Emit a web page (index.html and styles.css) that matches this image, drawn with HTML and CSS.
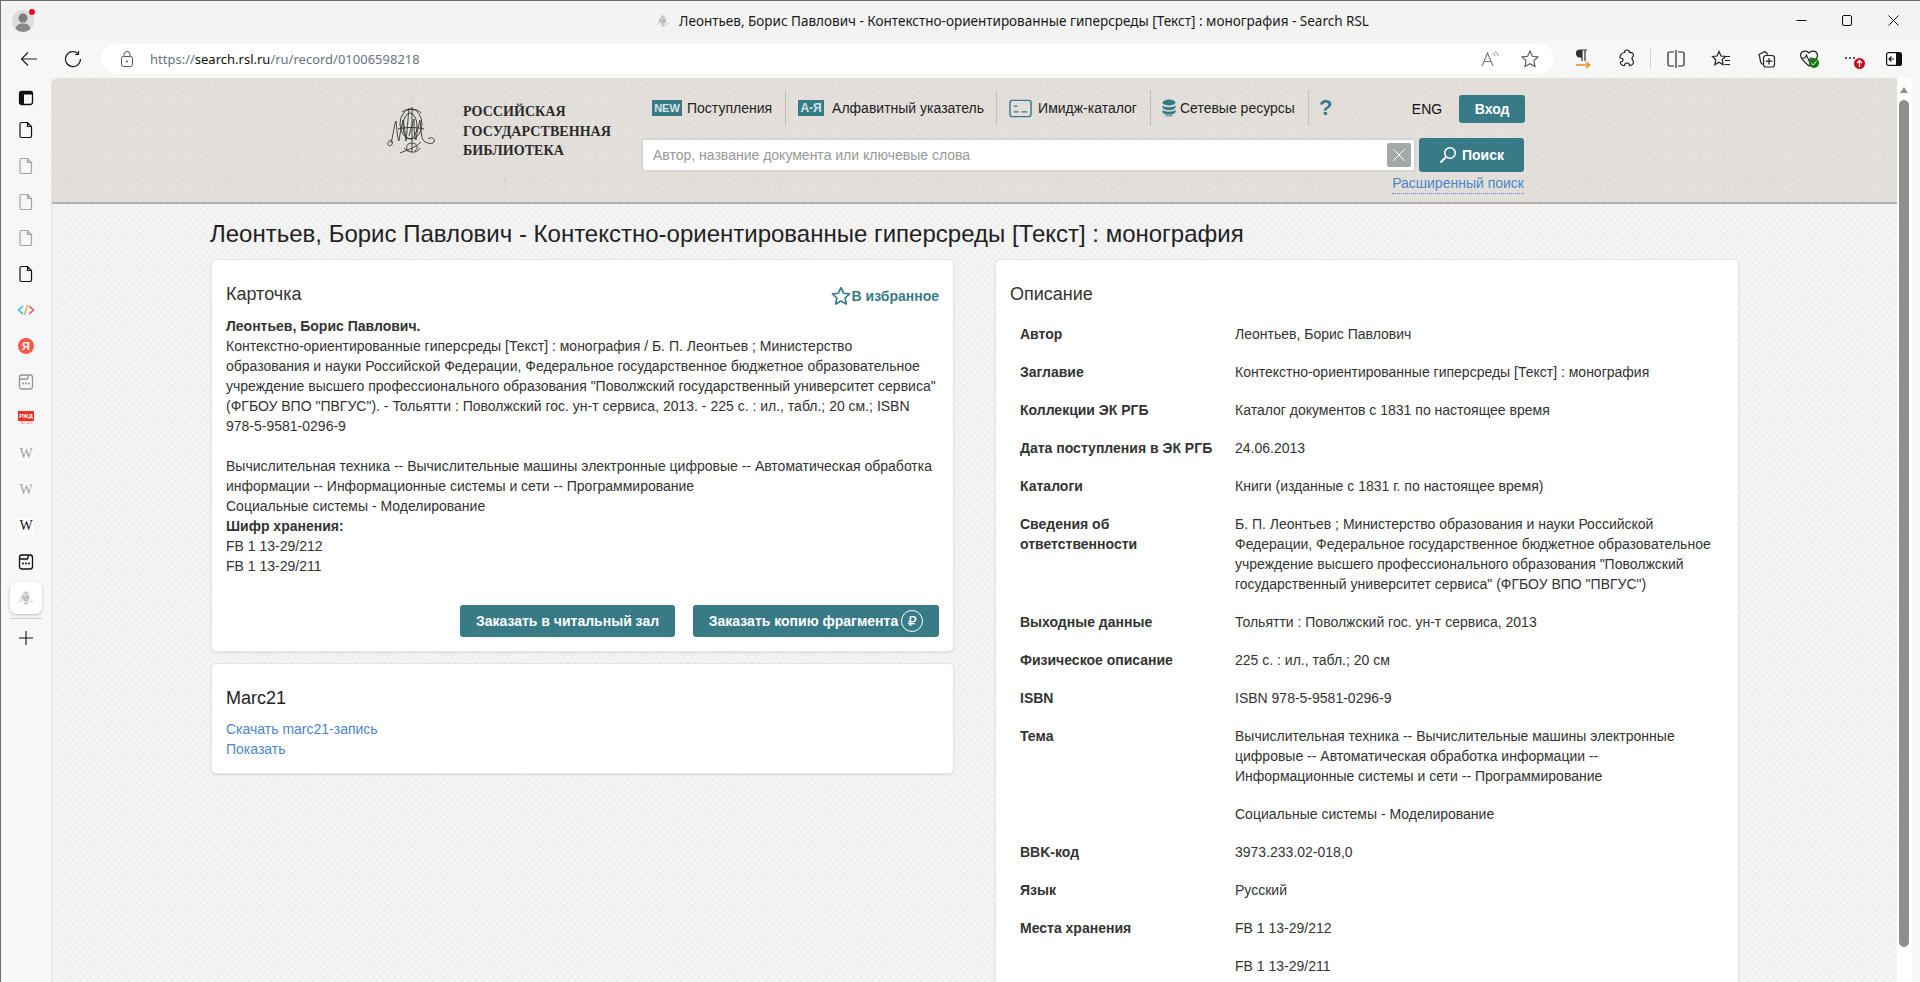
FILE: index.html
```html
<!DOCTYPE html>
<html lang="ru">
<head>
<meta charset="utf-8">
<title>Леонтьев, Борис Павлович - Контекстно-ориентированные гиперсреды [Текст] : монография - Search RSL</title>
<link rel="stylesheet" href="styles.css">
</head>
<body>
<svg class="sprite" aria-hidden="true">
  <symbol id="doc" viewBox="0 0 20 20"><path d="M5.500 2.500h6l4 4v9.500a1.500 1.500 0 0 1-1.500 1.500H5.500A1.500 1.500 0 0 1 4 16V4a1.500 1.500 0 0 1 1.500-1.500zM11.500 2.500V6.500h4" fill="none" stroke="currentColor" stroke-width="1.200"/></symbol>
  <symbol id="tabs" viewBox="0 0 20 20"><path d="M3.500 5.500A2.500 2.500 0 0 1 6 3h8a2.500 2.500 0 0 1 2.500 2.500v9A2.500 2.500 0 0 1 14 17H6a2.500 2.500 0 0 1-2.500-2.500zM3.500 7H11.500L12.500 3" fill="none" stroke="currentColor" stroke-width="1.300"/><circle cx="7" cy="11.500" r="1" fill="currentColor"/><circle cx="10" cy="11.500" r="1" fill="currentColor"/><circle cx="13" cy="11.500" r="1" fill="currentColor"/></symbol>
  <symbol id="mono" viewBox="0 0 50 50"><g fill="none" stroke="currentColor" stroke-width=".9"><ellipse cx="25" cy="19" rx="11" ry="15"/><ellipse cx="24" cy="21" rx="7" ry="13"/><path d="M1 38c2 5 7 2 5-2-2-2-4 0-3 2M5 38c2-7 3-17 5-22 1 7 1 16 3 20M13 36c1-8 3-17 4-21 2 7 2 16 3 21M20 36c1-9 2-22 3-33M23 31c2-8 4-14 5-17 0 8 0 16 2 21 1-8 3-16 4-20 1 8 1 16 3 20 2 3 9 5 11 2 2-3-3-6-6-3"/><path d="M26 2v45M14 48c7-3 15-5 21-11M18 43c4 5 13 6 16 0M16 7c5-4 15-4 19 1M12 24c8-2 18-2 26 0M22 46c-3-4-1-8 4-8s7 5 3 8"/></g></symbol>
</svg>

<div class="window">
  <header class="titlebar">
    <div class="avatar">
      <svg width="22" height="26" viewBox="0 0 22 26"><circle cx="11" cy="13" r="11" fill="#dcdcdc"/><circle cx="11" cy="10" r="4.500" fill="#7c7c7c"/><path d="M3.500 21c1-4.500 4-5.500 7.500-5.500s6.500 1 7.500 5.500a11 11 0 0 1-15 0z" fill="#8a8a8a"/></svg>
      <span class="avatar-dot"></span>
    </div>
    <div class="title">
      <svg class="title-fav" width="12" height="12"><use href="#mono"/></svg>
      <span>Леонтьев, Борис Павлович - Контекстно-ориентированные гиперсреды [Текст] : монография - Search RSL</span>
    </div>
    <div class="winctl">
      <span class="winbtn"><svg width="11" height="11" viewBox="0 0 11 11"><path d="M.5 5.500h10" stroke="#111" fill="none"/></svg></span>
      <span class="winbtn"><svg width="11" height="11" viewBox="0 0 11 11"><rect x=".5" y=".5" width="9" height="10" rx="1.500" fill="none" stroke="#111"/></svg></span>
      <span class="winbtn"><svg width="11" height="11" viewBox="0 0 11 11"><path d="M.5.500l10 10M10.500.500l-10 10" stroke="#111" fill="none"/></svg></span>
    </div>
  </header>

  <div class="toolbar">
    <span class="navbtn"><svg width="18" height="18" viewBox="0 0 18 18"><path d="M17 9H1.500M8 2.500 1.500 9 8 15.500" fill="none" stroke="#222" stroke-width="1.200"/></svg></span>
    <span class="navbtn"><svg width="18" height="18" viewBox="0 0 18 18"><path d="M14 3.500A7.500 7.500 0 1 0 16.500 9M14.500 1v3.500H11" fill="none" stroke="#222" stroke-width="1.200"/></svg></span>
    <div class="address">
      <svg class="lock" width="14" height="18" viewBox="0 0 14 18"><rect x="1.500" y="6.500" width="11" height="10" rx="2" fill="none" stroke="#555"/><path d="M4 6.500V4.500a3 3 0 0 1 6 0v2" fill="none" stroke="#555"/><circle cx="7" cy="11.500" r="1" fill="#555"/></svg>
      <span class="url"><span class="url-dim">https://</span>search.rsl.ru<span class="url-dim">/ru/record/01006598218</span></span>
      <span class="addr-icons">
        <svg width="20" height="20" viewBox="0 0 20 20"><path d="M2 17 7.500 4 13 17M4 12.500h7" fill="none" stroke="#777" stroke-width="1.100"/><path d="M13 4c1.500.5 2 2 2 3M15 2.500c2 .8 3 2.500 3 4.500" fill="none" stroke="#888"/></svg>
        <svg width="20" height="20" viewBox="0 0 20 20"><path d="M10 2l2.400 5.200 5.600.7-4.100 3.900 1.100 5.700-5-2.800-5 2.800 1.100-5.700L2 7.900l5.600-.7z" fill="none" stroke="#555" stroke-width="1.100"/></svg>
      </span>
    </div>
    <span class="tb-icon tb-first"><svg width="20" height="22" viewBox="-1 0 20 22"><path d="M9 2H7a3.500 3.500 0 0 0 0 7h2zM9 2v11M12 2v11M6.500 2H14" fill="#333" stroke="#333" stroke-width="1.200"/><path d="M3 17h13M13 14l3.500 3-3.500 3" fill="none" stroke="#f08a24" stroke-width="1.600"/></svg></span>
    <span class="tb-icon"><svg width="20" height="20" viewBox="0 0 20 20"><path d="M7.500 3.500a2.500 2.500 0 0 1 5 0c2-.5 4 1 4 3-.1 1-1.500 1-1.500 3s1.500 2 1.500 3.500c0 2-2 3.800-4 3.500a2.500 2.500 0 0 0-5 0c-2.500.3-4.500-1.500-4-3.500 2 0 2.500-1.500 2.500-2.500S4.500 9 3 9c-.3-3 2-5.500 4.500-5.500z" fill="none" stroke="#222" stroke-width="1.200"/></svg></span>
    <span class="tb-sep"></span>
    <span class="tb-icon"><svg width="20" height="20" viewBox="0 0 20 20"><path d="M8 3H3.500A1.500 1.500 0 0 0 2 4.500v11A1.500 1.500 0 0 0 3.500 17H8M12 3h4.500A1.500 1.500 0 0 1 18 4.500v11a1.500 1.500 0 0 1-1.500 1.500H12M10 1v18" fill="none" stroke="#222" stroke-width="1.200"/></svg></span>
    <span class="tb-icon"><svg width="20" height="20" viewBox="0 0 20 20"><path d="M8 2.500l2 4.500 4.500.5-3.300 3.200.9 5-4.100-2.500-4.100 2.500.9-5L1.500 7.500 6 7z" fill="none" stroke="#222" stroke-width="1.200"/><path d="M15 7.500h4M14 11.500h5M13.500 15.500h5.500" stroke="#222" stroke-width="1.200"/></svg></span>
    <span class="tb-icon"><svg width="20" height="20" viewBox="0 0 20 20"><path d="M4 9 3 5.500 9 2.500l3 3M4 9c0 3 .5 5 2.500 6.500" fill="none" stroke="#222" stroke-width="1.200"/><rect x="7.500" y="6.500" width="11" height="11.500" rx="2.500" fill="none" stroke="#222" stroke-width="1.200"/><path d="M13 9v6.500M9.800 12.200h6.500" stroke="#222" stroke-width="1.200"/></svg></span>
    <span class="tb-icon"><svg class="tb-heart" width="20" height="20" viewBox="0 0 20 20"><path d="M10 4c2-3 8-2.500 8.500 2 .2 2-1.500 4.500-4 7L10 17C6 13.500 1.500 10 1.500 6 2 1.500 8 1 10 4z" fill="none" stroke="#222" stroke-width="1.200"/><path d="M2 9h4l1.500-3 2.500 6 1.500-3h2" fill="none" stroke="#222" stroke-width="1.100"/></svg><span class="badge-ok"><svg width="8" height="8" viewBox="0 0 8 8"><path d="M1.500 4.200 3.300 6 6.500 2.200" fill="none" stroke="#fff"/></svg></span></span>
    <span class="tb-icon"><span class="dots"><i></i><i></i><i></i></span><span class="badge-up"><svg width="9" height="9" viewBox="0 0 9 9"><path d="M4.500 8V1.500M2 4l2.500-2.500L7 4" fill="none" stroke="#fff" stroke-width="1.300"/></svg></span></span>
    <span class="tb-icon tb-last"><svg width="16" height="14" viewBox="0 0 16 14"><rect x=".6" y=".6" width="14.800" height="12.800" rx="2" fill="#fff" stroke="#111" stroke-width="1.200"/><path d="M10 1h4a1.500 1.500 0 0 1 1.500 1.500v9A1.500 1.500 0 0 1 14 13h-4z" fill="#111"/><path d="M8 7H3M5.500 4.500 3 7l2.500 2.500" fill="none" stroke="#111" stroke-width="1.200"/></svg></span>
  </div>

  <div class="workspace">
    <nav class="sidebar">
      <span class="sb-item sb-first"><svg width="20" height="20" viewBox="0 0 20 20"><rect x="3.500" y="3.500" width="13" height="13" rx="2.500" fill="none" stroke="#111" stroke-width="1.300"/><path d="M3.500 6A2.500 2.500 0 0 1 6 3.500h10.500v3H8v10H6A2.500 2.500 0 0 1 3.500 14z" fill="#111"/></svg></span>
      <span class="sb-item"><svg width="20" height="20" class="ic-dark"><use href="#doc"/></svg></span>
      <span class="sb-item"><svg width="20" height="20" class="ic-dim"><use href="#doc"/></svg></span>
      <span class="sb-item"><svg width="20" height="20" class="ic-dim"><use href="#doc"/></svg></span>
      <span class="sb-item"><svg width="20" height="20" class="ic-dim"><use href="#doc"/></svg></span>
      <span class="sb-item"><svg width="20" height="20" class="ic-dark"><use href="#doc"/></svg></span>
      <span class="sb-item"><svg width="18" height="12" viewBox="0 0 18 12"><path d="M6 2 1.500 6 6 10" fill="none" stroke="#30b6e0" stroke-width="1.500"/><path d="M10.500 1 7.500 11" fill="none" stroke="#f5a53c" stroke-width="1.500"/><path d="M12 2l4.500 4L12 10" fill="none" stroke="#ec4b78" stroke-width="1.500"/></svg></span>
      <span class="sb-item"><span class="fav-ya">Я</span></span>
      <span class="sb-item"><svg width="20" height="20" class="ic-dim2"><use href="#tabs"/></svg></span>
      <span class="sb-item"><span class="fav-rzd"><span class="rzd-top">РЖД</span><span class="rzd-sub">ПАССАЖ</span></span></span>
      <span class="sb-item"><span class="fav-w fav-w-dim">W</span></span>
      <span class="sb-item"><span class="fav-w fav-w-dim">W</span></span>
      <span class="sb-item"><span class="fav-w">W</span></span>
      <span class="sb-item"><svg width="20" height="20" class="ic-dark"><use href="#tabs"/></svg></span>
      <span class="sb-item"><span class="sb-active"><svg width="14" height="14" class="ic-mono"><use href="#mono"/></svg></span></span>
      <span class="sb-divider"></span>
      <span class="sb-item"><svg width="16" height="16" viewBox="0 0 16 16"><path d="M8 1v14M1 8h14" stroke="#111" stroke-width="1.100" fill="none"/></svg></span>
    </nav>

    <div class="page">
      <div class="viewport">
        <header class="site-head">
          <a class="logo">
            <svg class="logo-mark" width="50" height="50"><use href="#mono"/></svg>
            <span class="logo-text">РОССИЙСКАЯ<br>ГОСУДАРСТВЕННАЯ<br>БИБЛИОТЕКА</span>
          </a>
          <div class="head-right">
            <div class="menu-row">
              <a class="menu-item menu-first"><span class="tag tag-new">NEW</span>Поступления</a>
              <a class="menu-item menu-alpha"><span class="tag tag-az">А-Я</span>Алфавитный указатель</a>
              <a class="menu-item menu-iconed menu-image"><svg class="menu-ic" width="23" height="19" viewBox="0 0 24 19"><rect x="1" y="1" width="22" height="17" rx="2.500" fill="none" stroke="#387b87" stroke-width="1.500"/><path d="M5 7h4M5 13h5M13 13h6" stroke="#387b87" stroke-width="1.500"/></svg>Имидж-каталог</a>
              <a class="menu-item menu-iconed"><svg class="menu-ic menu-ic-db" width="14" height="18" viewBox="0 0 14 18"><ellipse cx="7" cy="3.500" rx="6.500" ry="3" fill="#387b87"/><path d="M.5 6c1 3 12 3 13 0v2.500c-1 3.500-12 3.500-13 0zM.5 10.500c1 3 12 3 13 0V13c-1 3.500-12 3.500-13 0zM3 15.500c2 1.500 6 1.500 8 0v.5c-2 2-6 2-8 0z" fill="#387b87"/></svg>Сетевые ресурсы</a>
              <a class="menu-help">?</a>
              <a class="lang">ENG</a>
              <a class="btn btn-login">Вход</a>
            </div>
            <div class="search-row">
              <div class="search-box">
                <span class="placeholder">Автор, название документа или ключевые слова</span>
                <span class="search-clear"><svg width="14" height="14" viewBox="0 0 14 14"><path d="M1 1l12 12M13 1 1 13" stroke="#fff" fill="none"/></svg></span>
              </div>
              <a class="btn btn-search"><svg width="18" height="18" viewBox="0 0 18 18"><circle cx="11" cy="7" r="5.300" fill="none" stroke="#fff" stroke-width="1.600"/><path d="M7 11 1.500 16.500" stroke="#fff" stroke-width="2" fill="none"/></svg>Поиск</a>
            </div>
            <div class="adv-row"><a class="adv-link">Расширенный поиск</a></div>
          </div>
        </header>

        <main class="content">
          <h1 class="doc-title">Леонтьев, Борис Павлович - Контекстно-ориентированные гиперсреды [Текст] : монография</h1>
          <div class="columns">
            <div class="col">
              <section class="panel">
                <div class="panel-head">
                  <h2 class="panel-title">Карточка</h2>
                  <a class="fav-link"><svg width="20" height="20" viewBox="0 0 18 18"><path d="M9 1.500l2.300 5 5.400.6-4 3.700 1.100 5.400L9 13.500l-4.800 2.700 1.100-5.400-4-3.700 5.400-.6z" fill="none" stroke="#387b87" stroke-width="1.500" stroke-linejoin="round"/></svg>В избранное</a>
                </div>
                <div class="card-text">
                  <b>Леонтьев, Борис Павлович.</b><br>
                  Контекстно-ориентированные гиперсреды [Текст] : монография / Б. П. Леонтьев ; Министерство образования и науки Российской Федерации, Федеральное государственное бюджетное образовательное учреждение высшего профессионального образования "Поволжский государственный университет сервиса" (ФГБОУ ВПО "ПВГУС"). - Тольятти : Поволжский гос. ун-т сервиса, 2013. - 225 с. : ил., табл.; 20 см.; ISBN 978-5-9581-0296-9<br><br>
                  Вычислительная техника -- Вычислительные машины электронные цифровые -- Автоматическая обработка информации -- Информационные системы и сети -- Программирование<br>
                  Социальные системы - Моделирование<br>
                  <b>Шифр хранения:</b><br>
                  FB 1 13-29/212<br>
                  FB 1 13-29/211
                </div>
                <div class="card-actions">
                  <a class="btn btn-order btn-hall">Заказать в читальный зал</a>
                  <a class="btn btn-order btn-copy">Заказать копию фрагмента<span class="ruble">₽</span></a>
                </div>
              </section>
              <section class="panel panel-marc">
                <h2 class="panel-title panel-title-dark">Marc21</h2>
                <div class="marc-links">
                  <a class="link">Скачать marc21-запись</a>
                  <a class="link">Показать</a>
                </div>
              </section>
            </div>
            <div class="col">
              <section class="panel panel-desc">
                <h2 class="panel-title">Описание</h2>
                <table class="desc">
                  <tr><th>Автор</th><td>Леонтьев, Борис Павлович</td></tr>
                  <tr><th>Заглавие</th><td>Контекстно-ориентированные гиперсреды [Текст] : монография</td></tr>
                  <tr><th>Коллекции ЭК РГБ</th><td>Каталог документов с 1831 по настоящее время</td></tr>
                  <tr><th>Дата поступления в ЭК РГБ</th><td>24.06.2013</td></tr>
                  <tr><th>Каталоги</th><td>Книги (изданные с 1831 г. по настоящее время)</td></tr>
                  <tr><th>Сведения об ответственности</th><td>Б. П. Леонтьев ; Министерство образования и науки Российской Федерации, Федеральное государственное бюджетное образовательное учреждение высшего профессионального образования "Поволжский государственный университет сервиса" (ФГБОУ ВПО "ПВГУС")</td></tr>
                  <tr><th>Выходные данные</th><td>Тольятти : Поволжский гос. ун-т сервиса, 2013</td></tr>
                  <tr><th>Физическое описание</th><td>225 с. : ил., табл.; 20 см</td></tr>
                  <tr><th>ISBN</th><td>ISBN 978-5-9581-0296-9</td></tr>
                  <tr><th>Тема</th><td><p>Вычислительная техника -- Вычислительные машины электронные цифровые -- Автоматическая обработка информации -- Информационные системы и сети -- Программирование</p><p>Социальные системы - Моделирование</p></td></tr>
                  <tr><th>BBK-код</th><td>3973.233.02-018,0</td></tr>
                  <tr><th>Язык</th><td>Русский</td></tr>
                  <tr><th>Места хранения</th><td><p>FB 1 13-29/212</p><p>FB 1 13-29/211</p></td></tr>
                </table>
              </section>
            </div>
          </div>
        </main>
      </div>
      <div class="scrollbar">
        <span class="sc-up"></span>
        <span class="sc-thumb"></span>
      </div>
    </div>
  </div>
</div>
</body>
</html>
```

FILE: styles.css
```css
* { box-sizing: border-box; }
html, body { margin: 0; height: 982px; overflow: hidden; }
body { font-family: "Liberation Sans", Arial, sans-serif; font-size: 14px; line-height: 20px; color: #333; background: #f7f7f7; }
a { color: inherit; text-decoration: none; }
.sprite { position: absolute; width: 0; height: 0; }

.window { height: 982px; display: flex; flex-direction: column; border-top: 1px solid #6e6e6e; border-left: 1px solid #6e6e6e; }

/* title bar */
.titlebar { height: 39px; flex: none; display: flex; align-items: center; background: #f3f3f3; }
.avatar { position: relative; width: 44px; flex: none; padding-left: 11px; display: flex; align-items: center; }
.avatar-dot { position: absolute; left: 28px; top: 1px; width: 6px; height: 6px; border-radius: 50%; background: #e81123; }
.title { flex: 1; display: flex; align-items: center; justify-content: center; gap: 10px; padding-left: 203px; font-family: "Noto Sans", sans-serif; font-size: 13.500px; color: #1a1a1a; white-space: nowrap; }
.title-fav { color: #777; }
.winctl { display: flex; flex: none; margin-right: 4px; }
.winbtn { width: 46px; height: 39px; display: flex; align-items: center; justify-content: center; }

/* toolbar */
.toolbar { height: 38px; flex: none; display: flex; align-items: center; background: #f7f7f7; padding-left: 6px; }
.navbtn { width: 44px; height: 30px; display: flex; align-items: center; justify-content: center; flex: none; }
.address { width: 1453px; height: 30px; margin-left: 6px; flex: none; display: flex; align-items: center; background: #fff; border-radius: 15px; padding-left: 19px; }
.url { margin-left: 16px; font-family: "Noto Sans", sans-serif; font-size: 13px; color: #111; white-space: nowrap; }
.url-dim { color: #6b7280; }
.addr-icons { margin-left: auto; display: flex; gap: 20px; padding-right: 14px; }
.tb-icon { width: 45px; height: 30px; flex: none; display: flex; align-items: center; justify-content: center; position: relative; }
.tb-first { margin-left: 6px; width: 44px; }
.tb-last { width: 32px; }
.tb-sep { width: 4px; height: 20px; flex: none; position: relative; }
.tb-sep::before { content: ""; position: absolute; left: 1px; top: 0; width: 1px; height: 20px; background: #cfcfcf; }
.tb-heart { margin-left: -3px; }
.badge-ok { position: absolute; left: 21px; top: 14px; width: 10px; height: 10px; border-radius: 50%; background: #107c10; display: flex; align-items: center; justify-content: center; }
.dots { display: flex; gap: 2px; margin-top: -2px; margin-left: -11px; }
.dots i { width: 2px; height: 2px; background: #222; border-radius: 50%; }
.badge-up { position: absolute; left: 21px; top: 14px; width: 11px; height: 11px; border-radius: 50%; background: #c50f1f; display: flex; align-items: center; justify-content: center; }

/* workspace */
.workspace { flex: 1; min-height: 0; display: flex; }
.sidebar { width: 51px; flex: none; display: flex; flex-direction: column; align-items: center; background: #f7f7f7; border-right: 1px solid #e4e4e4; padding-top: 1px; }
.sb-item { height: 36px; width: 100%; flex: none; display: flex; align-items: center; justify-content: center; }
.sb-first { height: 33px; padding-top: 4px; }
.ic-dark { color: #111; }
.ic-dim { color: #a3a3a3; }
.ic-dim2 { color: #969696; }
.ic-mono { color: #777; }
.fav-ya { width: 16px; height: 16px; border-radius: 50%; background: #fc5a48; color: #fff; font-size: 11px; font-weight: bold; line-height: 16px; text-align: center; }
.fav-rzd { display: flex; flex-direction: column; align-items: center; width: 16px; }
.rzd-top { width: 16px; height: 10px; background: #ee3124; color: #fff; font-size: 6px; line-height: 10px; font-weight: bold; text-align: center; }
.rzd-sub { color: #e98c86; font-size: 3px; line-height: 4px; }
.fav-w { width: 16px; height: 16px; background: #fff; font-family: "Liberation Serif", serif; font-size: 14px; line-height: 16px; text-align: center; color: #111; }
.fav-w-dim { color: #a0a0a0; background: #fafafa; }
.sb-active { width: 32px; height: 32px; background: #fff; border-radius: 7px; box-shadow: 0 1px 3px rgba(0,0,0,.25); display: flex; align-items: center; justify-content: center; }
.sb-divider { width: 32px; height: 1px; background: #cfcfcf; margin: 2px 0 1px; flex: none; }

/* page */
.page { flex: 1; min-width: 0; display: flex; margin-right: 8px; background: #fff; border-top-left-radius: 6px; overflow: hidden; }
.viewport { flex: 1; min-width: 0; overflow: hidden; background-color: #f5f5f5; background-image: repeating-linear-gradient(45deg, rgba(0,0,0,.014) 0 2px, transparent 2px 5px), repeating-linear-gradient(-45deg, rgba(0,0,0,.014) 0 2px, transparent 2px 5px); }
.scrollbar { width: 15px; flex: none; background: #fff; position: relative; }
.sc-up { position: absolute; left: 3px; top: 9px; border-left: 4.500px solid transparent; border-right: 4.500px solid transparent; border-bottom: 6px solid #8f8f8f; }
.sc-thumb { position: absolute; left: 2px; top: 22px; width: 10px; height: 847px; border-radius: 5px; background: #8f8f8f; }

/* site header */
.site-head { height: 126px; display: flex; padding-left: 334px; background-color: #e2dfdb; border-bottom: 2px solid #b3b1ae;
  background-image:
    radial-gradient(circle at 30% 40%, rgba(255,255,255,.3) 0 .6px, transparent 1px),
    radial-gradient(circle at 70% 20%, rgba(150,145,135,.14) 0 .6px, transparent 1px),
    radial-gradient(circle at 15% 80%, rgba(255,255,255,.22) 0 .6px, transparent 1px),
    radial-gradient(circle at 60% 70%, rgba(140,135,125,.16) 0 .7px, transparent 1.100px);
  background-size: 13px 17px, 23px 11px, 19px 29px, 31px 37px; }
.logo { display: flex; align-items: flex-start; padding-top: 27px; width: 256px; flex: none; }
.logo-mark { color: #333; flex: none; }
.logo-text { margin: -3px 0 0 27px; font-family: "Liberation Serif", serif; font-weight: bold; font-size: 14.100px; line-height: 19.500px; color: #2b2b2b; white-space: nowrap; }
.head-right { width: 883px; flex: none; }
.menu-row { height: 36px; margin-top: 12px; padding-left: 10px; display: flex; align-items: center; }
.menu-item { height: 36px; display: flex; align-items: center; color: #222; white-space: nowrap; padding: 0 13px 0 12px; border-right: 1px solid #c2c0bc; }
.menu-first { padding-left: 0; }
.menu-alpha { padding-right: 12px; }
.menu-iconed { padding-left: 11px; }
.menu-image { padding-left: 12px; }
.tag { height: 16px; margin-right: 5px; background: #387b87; color: #d3e5e8; font-size: 11px; line-height: 16px; font-weight: bold; text-align: center; }
.tag-new { width: 30px; }
.tag-az { width: 26px; margin-right: 8px; font-size: 12px; }
.menu-ic { margin-right: 6px; flex: none; }
.menu-ic-db { margin-right: 4px; }
.menu-help { margin-left: 10px; width: 14px; color: #387b87; font-size: 22px; font-weight: bold; line-height: 36px; }
.lang { margin-left: 79px; color: #111; padding-top: 2px; }
.btn { display: flex; align-items: center; justify-content: center; background: #387b87; color: #fff; font-weight: bold; border-radius: 3px; white-space: nowrap; }
.btn-login { width: 66px; height: 28px; margin-left: 17px; margin-top: 2px; }
.search-row { display: flex; margin: 12px 0 0 -1px; }
.search-box { width: 775px; height: 34px; background: #fff; border: 2px solid #d8d6d2; border-radius: 4px; display: flex; align-items: center; padding: 0 3px 0 10px; }
.placeholder { color: #999; }
.search-clear { margin-left: auto; width: 24px; height: 24px; background: #a5a8a8; border-radius: 2px; display: flex; align-items: center; justify-content: center; }
.btn-search { width: 105px; height: 34px; margin-left: 3px; gap: 5px; }
.adv-row { display: flex; justify-content: flex-end; width: 882px; margin-top: 2px; }
.adv-link { color: #4a86c8; border-bottom: 1px dotted #4a86c8; line-height: 19px; }

/* content */
.content { width: 1557px; margin: 0 auto; padding: 17px 15px 0; }
.doc-title { margin: 0 0 12px -1px; font-size: 24px; line-height: 26px; font-weight: normal; color: #222; white-space: nowrap; }
.columns { display: grid; grid-template-columns: 743px 744px; column-gap: 41px; }
.col { min-width: 0; }
.panel { background: #fff; border: 1px solid #e4e4e4; border-radius: 5px; box-shadow: 0 1px 2px rgba(0,0,0,.1); padding: 24px 14px 14px; }
.panel-marc { margin-top: 11px; }
.panel-head { display: flex; justify-content: space-between; align-items: flex-start; }
.panel-title { margin: 0; font-size: 18px; line-height: 20px; font-weight: normal; color: #333; }
.panel-title-dark { color: #222; }
.fav-link { display: flex; align-items: center; gap: 1px; color: #387b87; font-weight: bold; margin-top: 2px; }
.card-text { margin-top: 10px; }
.card-actions { display: flex; justify-content: flex-end; gap: 18px; margin-top: 29px; }
.btn-order { height: 32px; }
.btn-hall { width: 215px; }
.btn-copy { width: 246px; gap: 3px; }
.ruble { width: 22px; height: 22px; border: 1px solid #fff; border-radius: 50%; display: flex; align-items: center; justify-content: center; font-weight: normal; font-size: 14px; font-family: "DejaVu Sans", sans-serif; }
.marc-links { margin-top: 11px; }
.link { display: block; color: #4a86c8; }
.desc { width: 100%; margin-top: 11px; border-collapse: collapse; table-layout: fixed; }
.desc th { width: 215px; padding: 9px 10px; text-align: left; vertical-align: top; font-weight: bold; color: #333; }
.desc td { padding: 9px 10px; vertical-align: top; color: #333; }
.desc p { margin: 0 0 18px; }
.desc p:last-child { margin-bottom: 0; }
```
